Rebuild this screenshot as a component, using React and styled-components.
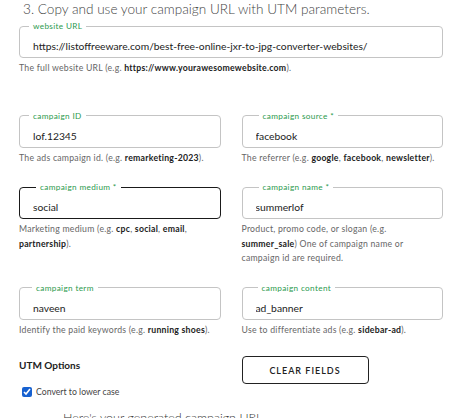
import React from 'react';
import styled, { createGlobalStyle } from 'styled-components';

const GlobalStyle = createGlobalStyle`
    html, body {
        margin: 0;
        padding: 0;
        background: #ffffff;
        overflow: hidden;
    }
    body {
        font-family: Lato, "Noto Sans", sans-serif;
        color: #333;
    }
`;

const fields = [
    { label: 'campaign ID', value: 'lof.12345', offset: 0, help: <>The ads campaign id. (e.g. <b>remarketing-2023</b>).</> },
    { label: 'campaign source *', value: 'facebook', offset: 7, help: <>The referrer (e.g. <b>google</b>, <b>facebook</b>, <b>newsletter</b>).</> },
    { label: 'campaign medium *', value: 'social', offset: 7, active: true, help: <>Marketing medium (e.g. <b>cpc</b>, <b>social</b>, <b>email</b>, <b>partnership</b>).</> },
    { label: 'campaign name *', value: 'summerlof', offset: 7, help: <>Product, promo code, or slogan (e.g. <b>summer_sale</b>) One of campaign name or campaign id are required.</> },
    { label: 'campaign term', value: 'naveen', offset: 3, help: <>Identify the paid keywords (e.g. <b>running shoes</b>).</> },
    { label: 'campaign content', value: 'ad_banner', offset: 6, help: <>Use to differentiate ads (e.g. <b>sidebar-ad</b>).</> },
];

const Field = ({ label, value, help, active, offset = 0 }) => (
    <FieldBlock>
        <FieldSet $active={active}>
            <Legend $offset={offset}>{label}</Legend>
            <Input defaultValue={value} readOnly />
        </FieldSet>
        <Help>{help}</Help>
    </FieldBlock>
);

const App = () => {
    return (
        <Page>
            <GlobalStyle />
            <Heading>3. Copy and use your campaign URL with UTM parameters.</Heading>
            <UrlSection>
                <Field
                    label="website URL"
                    value="https://listoffreeware.com/best-free-online-jxr-to-jpg-converter-websites/"
                    help={<>The full website URL (e.g. <b>https://www.yourawesomewebsite.com</b>).</>}
                />
            </UrlSection>
            <Grid>
                {fields.map((f) => (
                    <Field key={f.label} {...f} />
                ))}
            </Grid>
            <Options>
                <div>
                    <OptionsTitle>UTM Options</OptionsTitle>
                    <CheckRow>
                        <Check type="checkbox" defaultChecked />
                        Convert to lower case
                    </CheckRow>
                </div>
                <div>
                    <ClearButton>CLEAR FIELDS</ClearButton>
                </div>
            </Options>
            <Generated>Here's your generated campaign URL</Generated>
        </Page>
    );
};

const Page = styled.div`
    width: 450px;
    padding: 0 7px 0 19px;
    box-sizing: border-box;
`;

const Heading = styled.div`
    font-weight: 300;
    font-size: 13.6px;
    line-height: 18px;
    margin: 0 0 0 4px;
    color: #444;
    white-space: nowrap;
`;

const UrlSection = styled.div`
    margin-top: 3px;
    margin-bottom: 35px;
`;

const Grid = styled.div`
    display: grid;
    grid-template-columns: 1fr 1fr;
    column-gap: 21px;
    row-gap: 17px;
`;

const FieldBlock = styled.div`
    min-width: 0;
`;

const FieldSet = styled.fieldset`
    margin: 0;
    padding: 0 12px 1px;
    border: ${(p) => (p.$active ? '1.5px solid #1a1a1a' : '1px solid #c4c4c4')};
    border-radius: 4px;
    min-width: 0;
`;

const Legend = styled.legend`
    font-size: 8.2px;
    line-height: 10px;
    letter-spacing: 0.35px;
    color: #2b9a4e;
    padding: 0 4px;
    margin-left: ${(p) => p.$offset - 3}px;
`;

const Input = styled.input`
    display: block;
    width: 100%;
    box-sizing: border-box;
    border: none;
    outline: none;
    padding: 0 1px;
    margin-top: 5px;
    height: 20px;
    font-family: Lato, "Noto Sans", sans-serif;
    font-size: 10.3px;
    color: #222;
    background: transparent;
`;

const Help = styled.div`
    font-size: 8.7px;
    line-height: 14.5px;
    letter-spacing: 0.25px;
    color: #666;
    margin-top: 3px;
    b {
        color: #222;
        font-weight: 700;
    }
`;

const Options = styled.div`
    display: grid;
    grid-template-columns: 1fr 1fr;
    column-gap: 21px;
    margin-top: 19px;
`;

const OptionsTitle = styled.div`
    font-size: 10px;
    font-weight: 700;
    color: #222;
    margin-top: 3px;
`;

const CheckRow = styled.label`
    display: flex;
    align-items: center;
    gap: 4px;
    font-size: 8.7px;
    color: #444;
    margin-top: 15px;
    margin-left: 3px;
`;

const Check = styled.input`
    width: 10px;
    height: 10px;
    margin: 0;
    accent-color: #1761d0;
`;

const ClearButton = styled.button`
    width: 127px;
    height: 28px;
    background: #fff;
    border: 1px solid #222;
    border-radius: 4px;
    font-family: Lato, "Noto Sans", sans-serif;
    font-size: 9px;
    font-weight: 600;
    letter-spacing: 1px;
    color: #222;
    cursor: pointer;
`;

const Generated = styled.div`
    margin: 13px 0 0 44px;
    font-size: 12.5px;
    line-height: 16px;
    font-weight: 300;
    color: #333;
`;

export default App;
